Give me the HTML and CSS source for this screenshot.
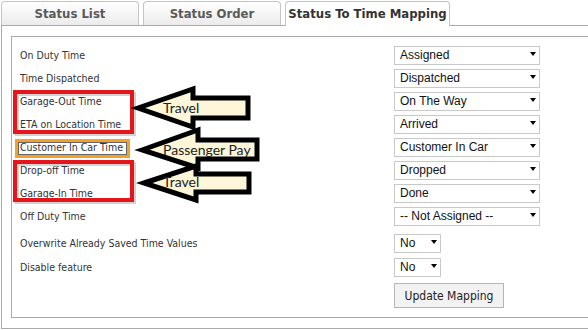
FILE: index.html
```html
<!DOCTYPE html>
<html lang="en">
<head>
    <meta charset="UTF-8">
    <title>Status To Time Mapping</title>
    <link rel="stylesheet" href="styles.css">
</head>
<body>
    <!-- Tabs -->
    <div class="tabs">
        <div class="tab">Status List</div>
        <div class="tab">Status Order</div>
        <div class="tab active">Status To Time Mapping</div>
    </div>

    <!-- Mapping form -->
    <div class="panel">
        <form class="mapping">
            <div class="row"><label>On Duty Time</label><span class="sel"><select><option>Assigned</option></select></span></div>
            <div class="row"><label>Time Dispatched</label><span class="sel"><select><option>Dispatched</option></select></span></div>
            <div class="row"><label>Garage-Out Time</label><span class="sel"><select><option>On The Way</option></select></span></div>
            <div class="row"><label>ETA on Location Time</label><span class="sel"><select><option>Arrived</option></select></span></div>
            <div class="row"><label>Customer In Car Time</label><span class="sel"><select><option>Customer In Car</option></select></span></div>
            <div class="row"><label>Drop-off Time</label><span class="sel"><select><option>Dropped</option></select></span></div>
            <div class="row"><label>Garage-In Time</label><span class="sel"><select><option>Done</option></select></span></div>
            <div class="row"><label>Off Duty Time</label><span class="sel"><select><option>-- Not Assigned --</option></select></span></div>
            <div class="row options"><label>Overwrite Already Saved Time Values</label><span class="sel small"><select><option>No</option></select></span></div>
            <div class="row disable"><label>Disable feature</label><span class="sel small"><select><option>No</option></select></span></div>
            <div class="row submit"><span></span><button type="button">Update Mapping</button></div>
        </form>
    </div>

    <!-- Annotations drawn over the screenshot -->
    <svg class="notes" width="588" height="330" viewBox="0 0 588 330">
        <rect x="17" y="94" width="117" height="40" class="shadow"/>
        <rect x="15" y="92" width="117" height="40" class="red"/>
        <rect x="17" y="164" width="117" height="38" class="shadow"/>
        <rect x="15" y="162" width="117" height="38" class="red"/>
        <rect x="16.5" y="140.5" width="112" height="16" class="orange"/>
        <rect x="18.5" y="142.5" width="108" height="12" class="inner"/>

        <polygon points="138,108 193,89 193,98 248,98 248,118 193,118 193,127" class="arrow"/>
        <polygon points="142,150 198,130 198,140 257,140 257,159 198,159 198,168" class="arrow"/>
        <polygon points="144,183 196,166 196,174 249,174 249,192 196,192 196,200" class="arrow"/>

        <text x="163" y="113">Travel</text>
        <text x="163" y="155">Passenger Pay</text>
        <text x="163" y="187">Travel</text>
    </svg>
</body>
</html>
```

FILE: styles.css
```css
/* Page */
html, body {
    margin: 0;
    overflow: hidden;
    background: #fff;
}

body {
    position: relative;
    width: 588px;
    height: 330px;
    font-family: "DejaVu Sans Condensed", "DejaVu Sans", sans-serif;
    color: #333;
}

/* Tabs row */
.tabs {
    display: flex;
    gap: 4px;
    margin: 1px 0 0 1px;
    height: 24px;
}

.tab {
    box-sizing: border-box;
    width: 138px;
    height: 24px;
    border: 1px solid #c4c4c4;
    border-bottom: none;
    border-radius: 4px 4px 0 0;
    background: linear-gradient(#fff, #ebebeb);
    color: #5a5a5a;
    font-weight: bold;
    font-size: 13px;
    line-height: 23px;
    text-align: center;
}

.tab.active {
    width: 165px;
    height: 25px;
    background: #fff;
    color: #333;
    position: relative;
    z-index: 1;
}

/* Outer panel and inner box (their right side is cut off by the window) */
.panel {
    box-sizing: border-box;
    width: 587px;
    margin-left: 1px;
    border: 1px solid #aaa;
    border-right: none;
    padding: 10px 0 10px 9px;
}

.mapping {
    box-sizing: border-box;
    height: 282px;
    border: 1px solid #aaa;
    border-right: none;
    padding: 8px 0 0 8px;
    display: flex;
    flex-direction: column;
    gap: 4px;
}

.row {
    display: flex;
    align-items: center;
    height: 19px;
}

.row label {
    width: 374px;
    font-size: 10.5px;
}

.row.options { margin-top: 4px; }
.row.disable { margin-top: 1px; }
.row.submit { height: 25px; margin-top: 3px; }
.row.submit span { width: 374px; }

/* Selects */
.sel {
    position: relative;
    display: block;
}

.sel select {
    appearance: none;
    -webkit-appearance: none;
    box-sizing: border-box;
    width: 146px;
    height: 19px;
    margin: 0;
    padding: 0 0 0 5px;
    border: 1px solid #c9c9c9;
    border-radius: 0;
    background: #fff;
    color: #111;
    font-family: "Liberation Sans", Arial, sans-serif;
    font-size: 12px;
}

.sel.small select { width: 47px; }

/* little black arrow of the select */
.sel::after {
    content: "";
    position: absolute;
    right: 4px;
    top: 8px;
    border-left: 3.5px solid transparent;
    border-right: 3.5px solid transparent;
    border-top: 4px solid #000;
}

button {
    box-sizing: border-box;
    width: 110px;
    height: 25px;
    border: 1px solid #b5b5b5;
    background: #f2f2f2;
    color: #222;
    font-family: "DejaVu Sans Condensed", "DejaVu Sans", sans-serif;
    font-size: 12px;
    padding: 0;
}

/* Annotations */
.notes {
    position: absolute;
    top: 0;
    left: 0;
    pointer-events: none;
}

.notes .red { fill: none; stroke: #e4151b; stroke-width: 4; }
.notes .shadow { fill: none; stroke: rgba(0,0,0,0.18); stroke-width: 4; }
.notes .orange { fill: none; stroke: #f2a22a; stroke-width: 3; }
.notes .inner { fill: none; stroke: #666; stroke-width: 1; }

.notes .arrow {
    fill: #fdf6d8;
    stroke: #000;
    stroke-width: 5;
    stroke-linejoin: miter;
}

.notes text {
    font-family: Lato, "Open Sans", sans-serif;
    font-size: 14px;
    fill: #222;
}
```
